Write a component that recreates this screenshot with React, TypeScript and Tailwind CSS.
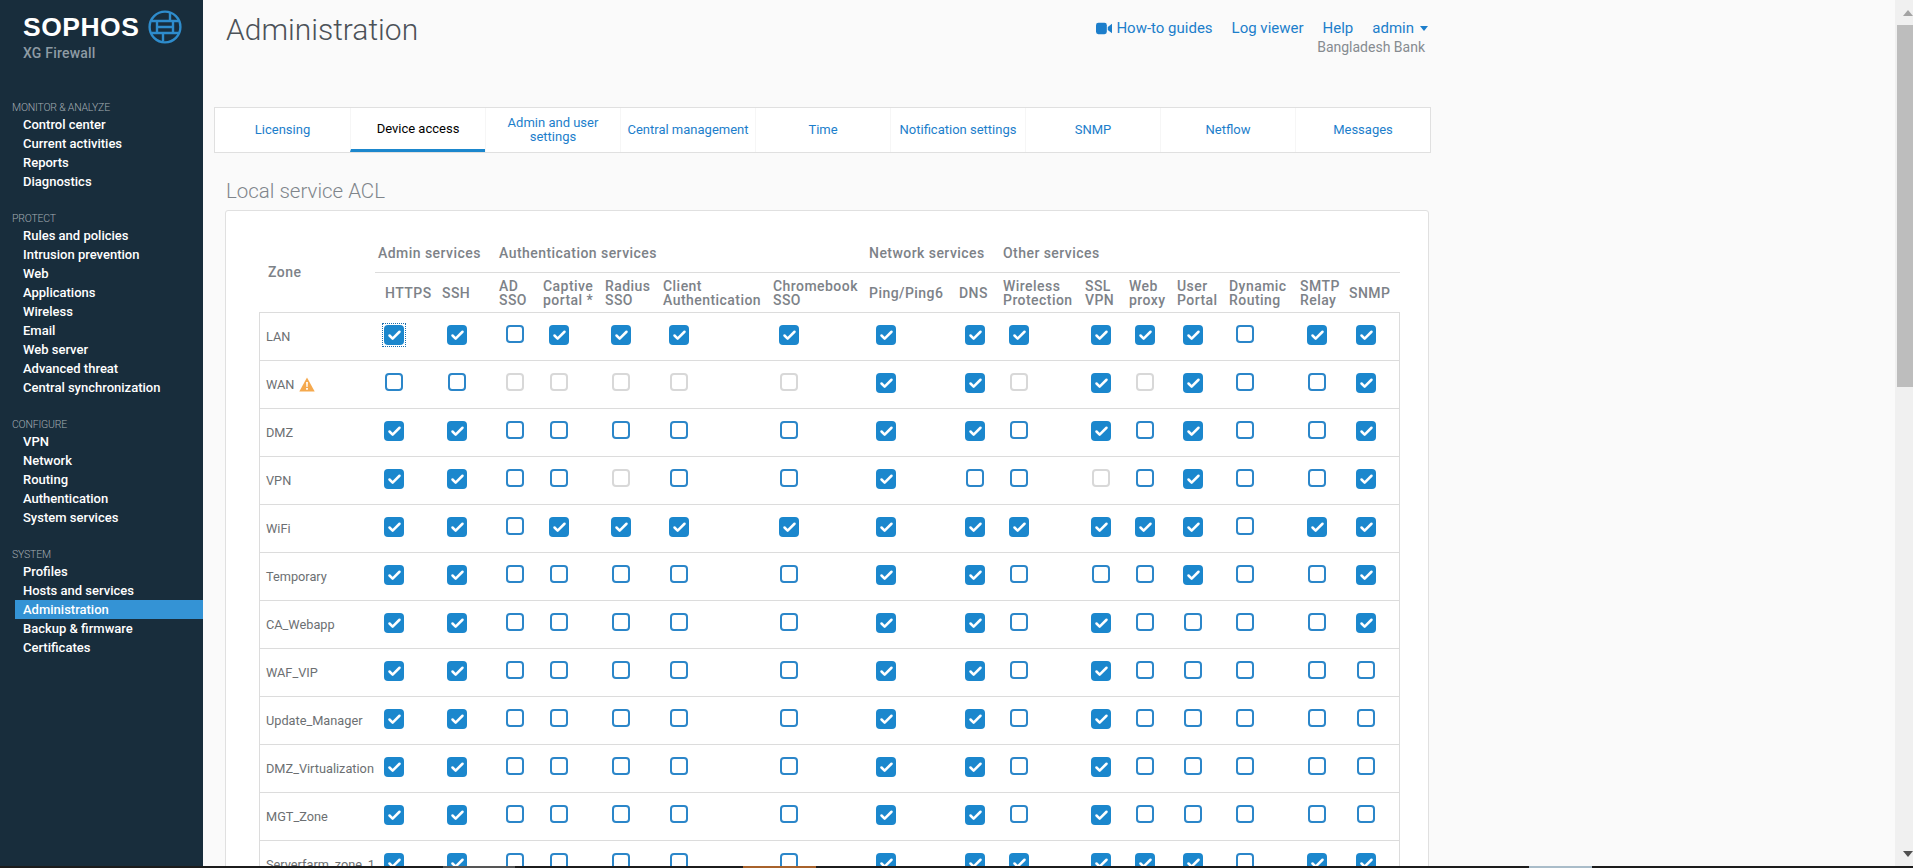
import { Check } from "lucide-react";

const navGroups = [
  {
    title: "MONITOR & ANALYZE",
    items: ["Control center", "Current activities", "Reports", "Diagnostics"],
  },
  {
    title: "PROTECT",
    items: [
      "Rules and policies",
      "Intrusion prevention",
      "Web",
      "Applications",
      "Wireless",
      "Email",
      "Web server",
      "Advanced threat",
      "Central synchronization",
    ],
  },
  {
    title: "CONFIGURE",
    items: ["VPN", "Network", "Routing", "Authentication", "System services"],
  },
  {
    title: "SYSTEM",
    items: ["Profiles", "Hosts and services", "Administration", "Backup & firmware", "Certificates"],
  },
];

const tabs = [
  "Licensing",
  "Device access",
  "Admin and user settings",
  "Central management",
  "Time",
  "Notification settings",
  "SNMP",
  "Netflow",
  "Messages",
];

const columns = [
  { lines: ["HTTPS"], head: "pl-[7px]", cell: "pl-[5px]" },
  { lines: ["SSH"], head: "", cell: "pl-1" },
  { lines: ["AD", "SSO"], head: "", cell: "pl-[5px]" },
  { lines: ["Captive", "portal *"], head: "", cell: "pl-[5px]" },
  { lines: ["Radius", "SSO"], head: "", cell: "pl-[5px]" },
  { lines: ["Client", "Authentication"], head: "", cell: "pl-[5px]" },
  { lines: ["Chromebook", "SSO"], head: "", cell: "pl-[5px]" },
  { lines: ["Ping/Ping6"], head: "", cell: "pl-1.5" },
  { lines: ["DNS"], head: "", cell: "pl-[5px]" },
  { lines: ["Wireless", "Protection"], head: "", cell: "pl-[5px]" },
  { lines: ["SSL", "VPN"], head: "", cell: "pl-[5px]" },
  { lines: ["Web", "proxy"], head: "", cell: "pl-[5px]" },
  { lines: ["User", "Portal"], head: "", cell: "pl-[5px]" },
  { lines: ["Dynamic", "Routing"], head: "", cell: "pl-[5px]" },
  { lines: ["SMTP", "Relay"], head: "", cell: "pl-1.5" },
  { lines: ["SNMP"], head: "", cell: "pl-1.5" },
];

// c = checked, u = unchecked, d = disabled
const rows = [
  { zone: "LAN", state: "ccuccccccccccucc" },
  { zone: "WAN", state: "uuddddd" + "ccdcdcuuc" },
  { zone: "DMZ", state: "ccuuuuuccucucuuc" },
  { zone: "VPN", state: "ccuuduucuuducuuc" },
  { zone: "WiFi", state: "ccuccccccccccucc" },
  { zone: "Temporary", state: "ccuuuuuccuuucuuc" },
  { zone: "CA_Webapp", state: "ccuuuuuccucuuuuc" },
  { zone: "WAF_VIP", state: "ccuuuuuccucuuuuu" },
  { zone: "Update_Manager", state: "ccuuuuuccucuuuuu" },
  { zone: "DMZ_Virtualization", state: "ccuuuuuccucuuuuu" },
  { zone: "MGT_Zone", state: "ccuuuuuccucuuuuu" },
  { zone: "Serverfarm_zone_1", state: "ccuuuuuccccccucc" },
];

const grid =
  "grid grid-cols-[119px_64px_57px_44px_62px_58px_110px_96px_90px_44px_82px_44px_48px_52px_71px_49px_50px]";

const Box = ({ state, focused }: { state: string; focused?: boolean }) => {
  const box =
    state === "c" ? (
      <span className="flex h-5 w-5 items-center justify-center rounded-[4px] bg-[#1b87cd]">
        <Check className="h-[15px] w-[15px] text-white" strokeWidth={4} />
      </span>
    ) : (
      <span
        className={`mx-px block h-[18px] w-[18px] rounded-[4px] border-2 bg-white ${
          state === "d" ? "border-[#d8d8d8]" : "border-[#2b86c9]"
        }`}
      />
    );
  if (!focused) return box;
  return <span className="-m-0.5 block w-fit border border-dotted border-[#1b6fae] p-px">{box}</span>;
};

const Sidebar = () => (
  <aside className="flex w-[203px] shrink-0 flex-col bg-[#182d3c]">
    <div className="h-[99px] pl-[23px] pt-[10px]">
      <div className="flex items-center gap-[9px]">
        <span className="font-['Liberation_Sans',sans-serif] text-[26.5px] font-bold leading-[32px] tracking-[0.5px] text-white">
          SOPHOS
        </span>
        <svg width="34" height="34" viewBox="0 0 34 34" fill="none" stroke="#2e8ccc" strokeWidth="2.4">
          <circle cx="17" cy="17" r="15.4" />
          <path d="M3.5 11h27M3.5 23h27M9 17h16" />
          <path d="M22 3v8M9 11v12M25 11v12M15 23v8" />
        </svg>
      </div>
      <div className="mt-px text-[14px] font-medium leading-[17px] tracking-[0.2px] text-[#8e9ba4]">XG Firewall</div>
    </div>
    {navGroups.map((g) => (
      <div key={g.title} className="mb-[19px]">
        <div className="h-4 pl-3 text-[10.5px] font-light leading-[18px] tracking-[-0.2px] text-[#a3acb2]">
          {g.title}
        </div>
        {g.items.map((item) => (
          <div
            key={item}
            className={`ml-[15px] h-[19px] pl-2 text-[13px] font-medium leading-[19px] text-white ${
              item === "Administration" ? "bg-[#3493d5]" : ""
            }`}
          >
            {item}
          </div>
        ))}
      </div>
    ))}
  </aside>
);

const Header = () => (
  <div className="flex h-[107px] w-[1217px] justify-between pl-[12px] pr-[3px] pt-[11px]">
    <h1 className="text-[30px] font-light leading-[38px] text-[#4c5258]">Administration</h1>
    <div className="flex flex-col items-end">
      <div className="flex items-center gap-[19px] pt-[8px] text-[15px] leading-[18px] text-[#1c7ecb]">
        <span className="flex items-center gap-1">
          <svg width="16" height="13" viewBox="0 0 17 13" fill="#1c7ecb">
            <rect x="0" y="0.5" width="11.5" height="12" rx="2.5" />
            <path d="M12.5 5l4.5-3.5v10L12.5 8z" />
          </svg>
          How-to guides
        </span>
        <span>Log viewer</span>
        <span>Help</span>
        <span className="flex items-center gap-[6px]">
          admin
          <span className="h-0 w-0 border-x-[4px] border-t-[5px] border-x-transparent border-t-[#1c7ecb]" />
        </span>
      </div>
      <div className="mr-[3px] mt-[1px] text-[14px] leading-[18px] text-[#868b90]">Bangladesh Bank</div>
    </div>
  </div>
);

const Tabs = () => (
  <div className="grid w-[1217px] grid-cols-9 border border-[#e0e0e0] bg-white">
    {tabs.map((t) => (
      <div
        key={t}
        className={`flex h-[44px] items-center justify-center border-l border-[#f6f6f6] px-[5px] pb-px text-center text-[13px] leading-[14px] first:border-l-0 ${
          t === "Device access" ? "border-b-[3px] border-b-[#1b87cd] pt-[1px] text-black" : "text-[#1c7ecb]"
        }`}
      >
        {t}
      </div>
    ))}
  </div>
);

const WarnIcon = () => (
  <svg width="16" height="15" viewBox="0 0 16 15">
    <path d="M8 0.5L15.7 14.5H0.3z" fill="#f5a94e" />
    <path d="M7.1 5h1.8l-0.3 5H7.4zM7.1 11h1.8v1.8H7.1z" fill="#fff" />
  </svg>
);

const AclTable = () => (
  <div className="mt-[5px] h-[700px] w-[1204px] rounded-t-[3px] border border-[#e0e0e0] bg-white pl-[33px] pt-[29px]">
    <div className="w-[1141px] text-[14px] font-medium leading-[14px] tracking-[0.45px] text-[#7d8288]">
      <div className="flex h-[72px]">
        <div className="flex w-[116px] shrink-0 items-center pb-2 pl-[9px]">Zone</div>
        <div className="flex-1">
          <div className="flex h-[33px] items-start border-b border-[#dcdcdc] pt-[6px]">
            <span className="ml-[3px] w-[121px]">Admin services</span>
            <span className="w-[370px]">Authentication services</span>
            <span className="w-[134px]">Network services</span>
            <span>Other services</span>
          </div>
          <div className="ml-[3px] grid h-[39px] grid-cols-[64px_57px_44px_62px_58px_110px_96px_90px_44px_82px_44px_48px_52px_71px_49px_50px] items-center">
            {columns.map((c) => (
              <div key={c.lines[0]} className={c.head}>
                {c.lines.map((l) => (
                  <div key={l} className="whitespace-nowrap">
                    {l}
                  </div>
                ))}
              </div>
            ))}
          </div>
        </div>
      </div>
    </div>
    <div className="w-[1141px] border-x border-t border-[#dcdcdc]">
      {rows.map((r, ri) => (
        <div key={r.zone} className={`${grid} h-[48px] border-b border-[#dcdcdc]`}>
          <div className="flex items-center gap-[5px] self-center whitespace-nowrap pl-[6px] text-[12.75px] text-[#6c6f72]">
            {r.zone}
            {r.zone === "WAN" && <WarnIcon />}
          </div>
          {columns.map((c, i) => (
            <div key={c.lines[0]} className={`pt-3 ${c.cell}`}>
              <Box state={r.state[i]} focused={ri === 0 && i === 0} />
            </div>
          ))}
        </div>
      ))}
    </div>
  </div>
);

const Scrollbar = () => (
  <div className="flex w-[18px] shrink-0 flex-col items-end bg-[#f0f0f0]">
    <div className="flex h-[25px] w-full items-start justify-end pt-[10px]">
      <span className="h-0 w-0 border-x-[5.5px] border-b-[6px] border-x-transparent border-b-[#a3a3a3]" />
    </div>
    <div className="h-[362px] w-4 bg-[#bdbdbd]" />
    <div className="mt-auto flex h-[15px] items-start justify-end">
      <span className="h-0 w-0 border-x-[5.5px] border-t-[6px] border-x-transparent border-t-[#505050]" />
    </div>
  </div>
);

export default function App() {
  return (
    <div className="flex h-[868px] w-[1913px] flex-col overflow-hidden bg-[#1c1c1c] font-['Roboto',sans-serif]">
      <div className="flex h-[866px] shrink-0">
        <Sidebar />
        <main className="min-w-0 flex-1 overflow-hidden bg-[#fafafa] pl-[11px]">
          <Header />
          <Tabs />
          <h2 className="mt-[25px] pl-[12px] text-[20.5px] font-light leading-[27px] text-[#7f858b]">
            Local service ACL
          </h2>
          <div className="pl-[11px]">
            <AclTable />
          </div>
        </main>
        <Scrollbar />
      </div>
      <div className="flex h-[2px] shrink-0">
        <div className="ml-[443px] w-[72px] bg-[#555555]" />
        <div className="ml-[228px] w-[73px] bg-[#a8622b]" />
        <div className="ml-[713px] w-[63px] bg-[#a9bcc9]" />
      </div>
    </div>
  );
}
